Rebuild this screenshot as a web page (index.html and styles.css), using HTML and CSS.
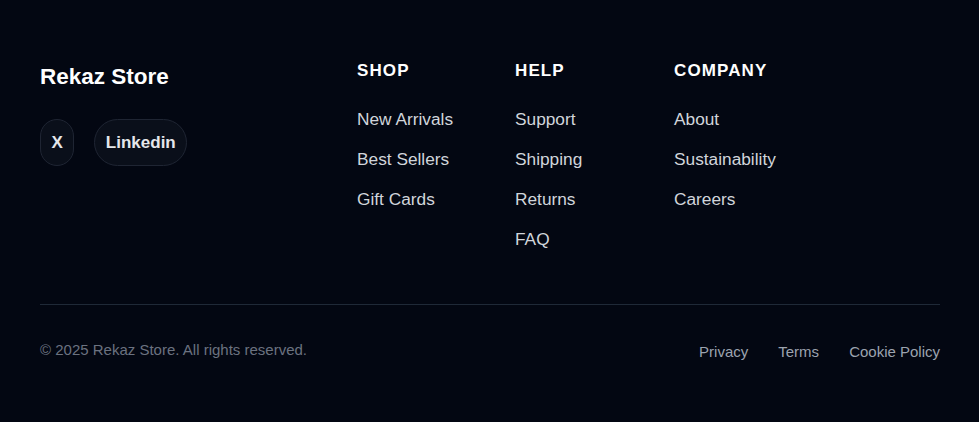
FILE: index.html
```html
<!DOCTYPE html>
<html lang="en">
<head>
<meta charset="utf-8">
<title>Rekaz Store</title>
<link rel="stylesheet" href="styles.css">
</head>
<body>
<footer class="footer">
  <div class="footer-top">
    <div class="brand">
      <div class="brand-name">Rekaz Store</div>
      <div class="socials">
        <a class="social" href="#">X</a>
        <a class="social" href="#">Linkedin</a>
      </div>
    </div>
    <div class="col">
      <h4 class="col-title">Shop</h4>
      <ul class="links">
        <li><a href="#">New Arrivals</a></li>
        <li><a href="#">Best Sellers</a></li>
        <li><a href="#">Gift Cards</a></li>
      </ul>
    </div>
    <div class="col">
      <h4 class="col-title">Help</h4>
      <ul class="links">
        <li><a href="#">Support</a></li>
        <li><a href="#">Shipping</a></li>
        <li><a href="#">Returns</a></li>
        <li><a href="#">FAQ</a></li>
      </ul>
    </div>
    <div class="col">
      <h4 class="col-title">Company</h4>
      <ul class="links">
        <li><a href="#">About</a></li>
        <li><a href="#">Sustainability</a></li>
        <li><a href="#">Careers</a></li>
      </ul>
    </div>
  </div>
  <div class="footer-bottom">
    <p class="copyright">© 2025 Rekaz Store. All rights reserved.</p>
    <nav class="legal">
      <a href="#">Privacy</a>
      <a href="#">Terms</a>
      <a href="#">Cookie Policy</a>
    </nav>
  </div>
</footer>
</body>
</html>
```
FILE: styles.css
```css
* { box-sizing: border-box; }
html, body { margin: 0; padding: 0; }
body {
  background: #030712;
  font-family: "Liberation Sans", Arial, sans-serif;
  color: #d1d5db;
  height: 422px;
  overflow: hidden;
}
a { text-decoration: none; color: inherit; }

.footer {
  padding: 59px 39px 0 40px;
}

.footer-top {
  display: grid;
  grid-template-columns: 317px 158px 159px 1fr;
  padding-bottom: 53px;
  border-bottom: 1px solid #1f2937;
}

.brand-name {
  font-size: 22.5px;
  font-weight: 700;
  line-height: 36px;
  color: #ffffff;
}

.socials {
  display: flex;
  gap: 20px;
  margin-top: 24px;
}

.social {
  display: inline-flex;
  align-items: center;
  justify-content: center;
  height: 47px;
  padding: 0 10.5px;
  border: 1px solid #1f2533;
  border-radius: 9999px;
  background: #0a0f1a;
  color: #e5e7eb;
  font-size: 17px;
  font-weight: 700;
}

.col-title {
  margin: 0;
  font-size: 17px;
  line-height: 24px;
  font-weight: 700;
  letter-spacing: 1.1px;
  text-transform: uppercase;
  color: #ffffff;
}

.links {
  list-style: none;
  margin: 24px 0 0 0;
  padding: 0;
  display: flex;
  flex-direction: column;
  gap: 16px;
}

.links li {
  font-size: 17.3px;
  line-height: 24px;
  color: #d1d5db;
}

.footer-bottom {
  display: flex;
  justify-content: space-between;
  align-items: center;
  padding-top: 33px;
}

.copyright {
  margin: 0;
  font-size: 15px;
  line-height: 20px;
  color: #6b7280;
}

.legal {
  display: flex;
  gap: 30px;
  margin-top: 4px;
  font-size: 15px;
  line-height: 20px;
  color: #9ca3af;
}
```
